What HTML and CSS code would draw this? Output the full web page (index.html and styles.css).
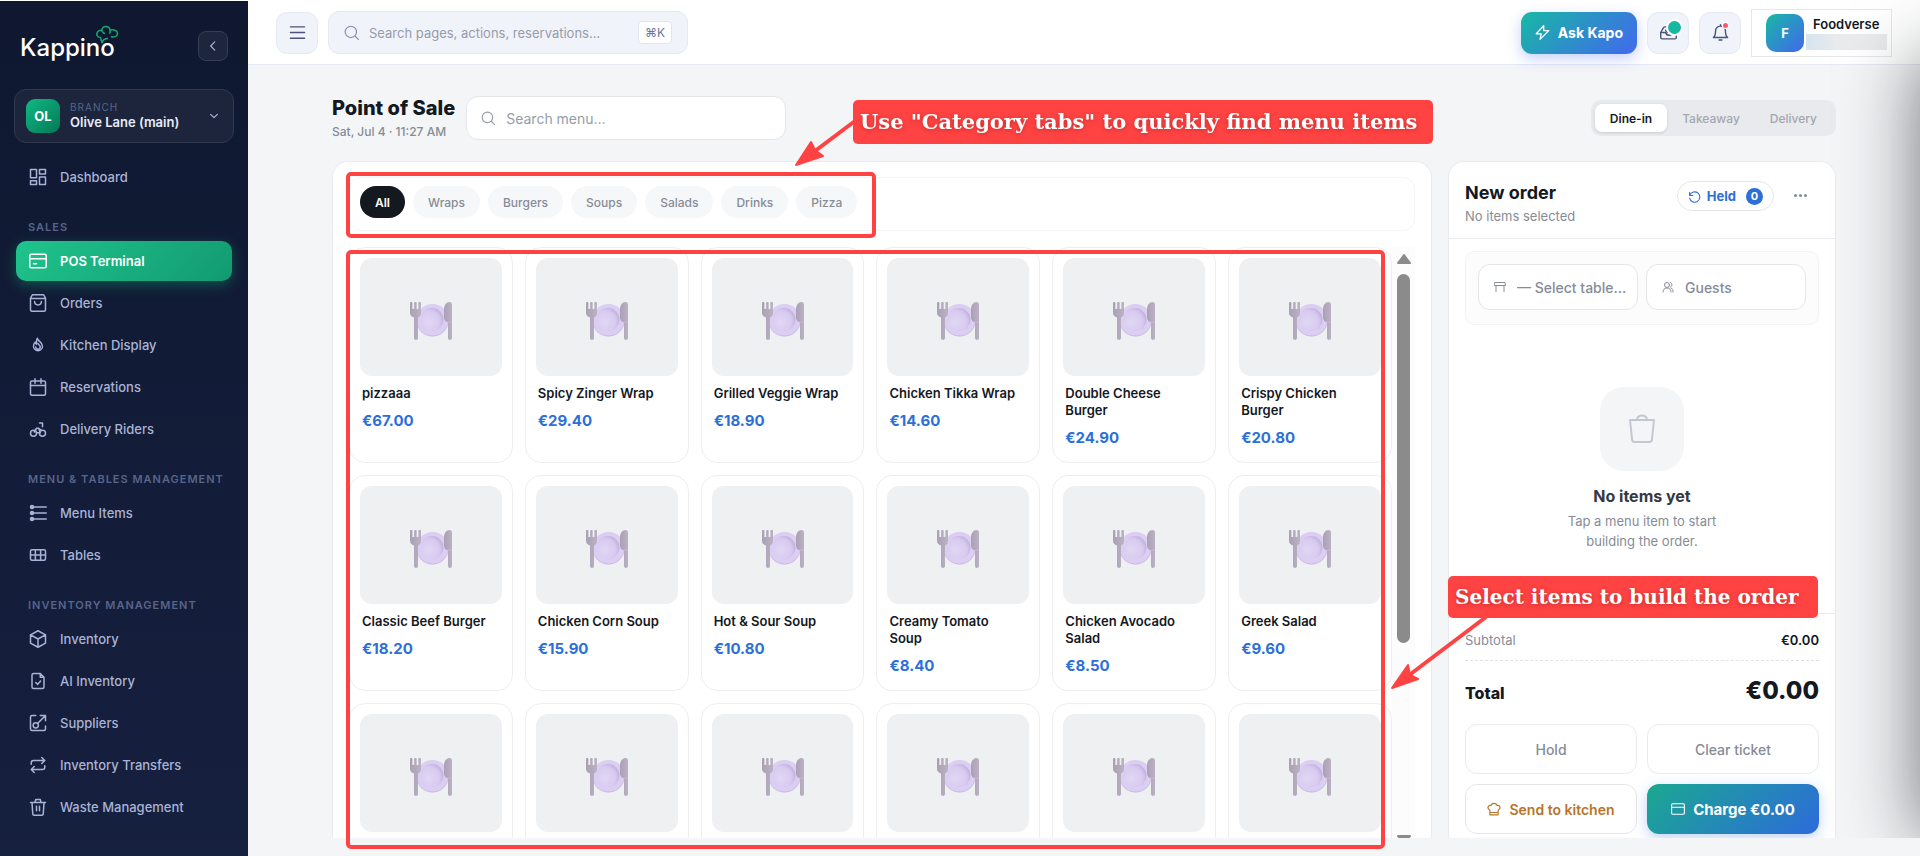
FILE: index.html
```html
<!DOCTYPE html>
<html lang="en">
<head>
    <meta charset="UTF-8">
    <meta name="viewport" content="width=device-width, initial-scale=1.0">
    <title>Kappino - Point of Sale</title>
    <link rel="stylesheet" href="styles.css">
</head>
<body>
    <!-- shared artwork for dishes without a photo -->
    <svg class="sprite" aria-hidden="true">
        <defs>
            <radialGradient id="dish" cx="35%" cy="60%" r="65%">
                <stop offset="0" stop-color="#e2d7f5"/>
                <stop offset="0.75" stop-color="#d7caef"/>
                <stop offset="1" stop-color="#c3b3de"/>
            </radialGradient>
            <linearGradient id="steel" x1="0" x2="1">
                <stop offset="0" stop-color="#aaa0b6"/>
                <stop offset="1" stop-color="#bab2c2"/>
            </linearGradient>
        </defs>
        <symbol id="plate" viewBox="0 0 42 38">
            <circle cx="22.5" cy="18.5" r="16" fill="#c9b6e4"/>
            <circle cx="22.5" cy="17.8" r="15.8" fill="#dccdf3"/>
            <circle cx="22" cy="17.6" r="11.5" fill="url(#dish)"/>
            <path fill="url(#steel)" d="M0 1a1 1 0 0 1 2.400 0v6h1.800V1a1 1 0 0 1 2.400 0v6h1.800V1a1 1 0 0 1 2.600 0v10c0 2-1.200 3.500-3 4.500V36a2 2 0 0 1-4 0V15.500C1.500 14.500 0 13 0 11z"/>
            <path fill="url(#steel)" d="M42 2.500V36a2 2 0 0 1-4 0V20.500c-2.500-.5-4-2.500-4-5.500V7.500C34 3 36.500 0 39.500 0 41 0 42 1 42 2.500z"/>
            <path fill="none" stroke="#c6bfd0" stroke-width="0.800" d="M38 20.200h3.800"/>
        </symbol>
    </svg>

    <div class="app">
        <aside class="sidebar">
            <div class="brand">
                <a class="logo" href="#">Kappino
                    <svg class="logo-hat" viewBox="0 0 24 20"><path d="M7 18 5.500 12.500C2 12.500 1 9 2.500 7S6 5 7 6c-.5-3 1.500-5 4.500-4.500s3.500 2.500 3.500 4c2-1.500 7-.5 7.500 2.500s-3 5-6.500 3.500M7 18c.5-2.500 3-4.500 6-4.500M7.500 6.500c.5 1.500 1.500 2 2.500 2M15 6c.5 1 .2 2-.5 2.800"/></svg>
                </a>
                <button class="collapse" aria-label="Collapse sidebar"><svg class="ico" viewBox="0 0 24 24"><path d="m15 5-7 7 7 7"/></svg></button>
            </div>

            <button class="branch">
                <span class="branch-badge">OL</span>
                <span class="branch-text"><small>BRANCH</small><b>Olive Lane (main)</b></span>
                <svg class="ico" viewBox="0 0 24 24"><path d="m4 8 8 8 8-8"/></svg>
            </button>

            <nav class="nav">
                <a href="#"><svg class="ico" viewBox="0 0 24 24"><rect x="2" y="2" width="8" height="11"/><rect x="14" y="2" width="8" height="6"/><rect x="2" y="17" width="8" height="5"/><rect x="14" y="12" width="8" height="10"/></svg>Dashboard</a>
                <h2>SALES</h2>
                <a href="#" class="active"><svg class="ico" viewBox="0 0 24 24"><rect x="1" y="3" width="22" height="18" rx="2"/><path d="M1 9h22M6 15.500h4"/></svg>POS Terminal</a>
                <a href="#"><svg class="ico" viewBox="0 0 24 24"><path d="M4.500 1h15L22 5.500V21a2 2 0 0 1-2 2H4a2 2 0 0 1-2-2V5.500zM2 6h20M7.500 10c0 6 9 6 9 0"/></svg>Orders</a>
                <a href="#"><svg class="ico" viewBox="0 0 24 24"><path d="M11 3c1 4 7 5 7 10.500a6 6 0 0 1-12 0C6 10.500 7 9 8.500 8c0 2 .5 2.500 1.500 3 0-3-.5-5 1-8zM12 10c1 2 3 2.500 3 4.500a3 3 0 0 1-6 0"/></svg>Kitchen Display</a>
                <a href="#"><svg class="ico" viewBox="0 0 24 24"><rect x="2" y="4" width="20" height="19" rx="2"/><path d="M2 10h20M8 1v6M16 1v6"/></svg>Reservations</a>
                <a href="#"><svg class="ico" viewBox="0 0 24 24"><circle cx="6" cy="17.500" r="4"/><circle cx="18" cy="17.500" r="4"/><path d="M7 16l3-5h3l2 6h-5M13 11l4 3M14 4h4v5"/></svg>Delivery Riders</a>
                <h2>MENU &amp; TABLES MANAGEMENT</h2>
                <a href="#"><svg class="ico" viewBox="0 0 24 24"><path d="M5 4h18M5 12h18M5 20h18"/><g fill="currentColor"><circle cx="4" cy="4" r="2"/><circle cx="4" cy="12" r="2"/><circle cx="4" cy="20" r="2"/></g></svg>Menu Items</a>
                <a href="#"><svg class="ico" viewBox="0 0 24 24"><rect x="2" y="5" width="20" height="14" rx="2"/><path d="M2 12h20M8.500 5v14M15.500 5v14"/></svg>Tables</a>
                <h2>INVENTORY MANAGEMENT</h2>
                <a href="#"><svg class="ico" viewBox="0 0 24 24"><path d="m12 1 10 5.500v11L12 23 2 17.500v-11zM2 6.500l10 5.500 10-5.500M12 12v11"/></svg>Inventory</a>
                <a href="#"><svg class="ico" viewBox="0 0 24 24"><path d="M6 2h9l5 5v13a2 2 0 0 1-2 2H6a2 2 0 0 1-2-2V4a2 2 0 0 1 2-2zM15 2v5h5M9 14l2.500 2.500L15.500 12"/></svg>AI Inventory</a>
                <a href="#"><svg class="ico" viewBox="0 0 24 24"><path d="M9 2H4a2 2 0 0 0-2 2v16a2 2 0 0 0 2 2h16a2 2 0 0 0 2-2v-4M12 12 22 2M15 2h7v7"/><circle cx="9" cy="15" r="3.500"/></svg>Suppliers</a>
                <a href="#"><svg class="ico" viewBox="0 0 24 24"><path d="M3 11V9a3 3 0 0 1 3-3h15M17 2l4 4-4 4M21 13v2a3 3 0 0 1-3 3H3M7 14l-4 4 4 4"/></svg>Inventory Transfers</a>
                <a href="#"><svg class="ico" viewBox="0 0 24 24"><path d="M2 6h20M8 6l1-4h6l1 4M4 6l1 15a2 2 0 0 0 2 2h10a2 2 0 0 0 2-2l1-15M10 11v6M14 11v6"/></svg>Waste Management</a>
            </nav>
        </aside>

        <div class="content">
            <header class="topbar">
                <button class="icon-btn" aria-label="Menu"><svg class="ico" viewBox="0 0 24 24"><path d="M2 4h20M2 12h20M2 20h20"/></svg></button>
                <label class="global-search">
                    <svg class="ico" viewBox="0 0 24 24"><circle cx="11" cy="11" r="9"/><path d="m18 18 5 5"/></svg>
                    <input type="text" placeholder="Search pages, actions, reservations…" aria-label="Search pages">
                    <kbd>⌘K</kbd>
                </label>
                <div class="topbar-right">
                    <button class="ask"><svg class="ico" viewBox="0 0 24 24"><path d="M14 1 2 14h8l-2 9L22 9h-8z"/></svg>Ask Kapo</button>
                    <button class="icon-btn" aria-label="Inbox">
                        <svg class="ico" viewBox="0 0 24 24"><path d="M1 12 5 5q.5-1 2-1h5M1 12v7a2 2 0 0 0 2 2h18a2 2 0 0 0 2-2v-6h-6c-1 4-8 4-9-1zM8 9l3 3"/></svg>
                        <i class="dot dot-green"></i>
                    </button>
                    <button class="icon-btn" aria-label="Notifications">
                        <svg class="ico" viewBox="0 0 24 24"><path d="M2 19c3-2 3-5 3-9a7 7 0 0 1 14 0c0 4 0 7 3 9zM10 22.500h4M12 3V1"/></svg>
                        <i class="dot dot-red"></i>
                    </button>
                    <button class="profile">
                        <span class="avatar">F</span>
                        <span class="profile-text"><b>Foodverse</b><i class="profile-mask"></i></span>
                    </button>
                </div>
            </header>

            <main class="page">
                <div class="page-head">
                    <div class="page-title">
                        <h1>Point of Sale</h1>
                        <p>Sat, Jul 4 · 11:27 AM</p>
                    </div>
                    <label class="menu-search">
                        <svg class="ico" viewBox="0 0 24 24"><circle cx="11" cy="11" r="9"/><path d="m18 18 5 5"/></svg>
                        <input type="text" placeholder="Search menu…" aria-label="Search menu">
                    </label>
                    <div class="order-type">
                        <button class="active">Dine-in</button>
                        <button>Takeaway</button>
                        <button>Delivery</button>
                    </div>
                </div>

                <div class="columns">
                    <section class="panel menu-panel">
                        <div class="tabs">
                            <button class="active">All</button>
                            <button>Wraps</button>
                            <button>Burgers</button>
                            <button>Soups</button>
                            <button>Salads</button>
                            <button>Drinks</button>
                            <button>Pizza</button>
                        </div>
                        <div class="menu-scroll">
                            <div class="menu-grid">
                                <button class="item"><span class="thumb"><svg><use href="#plate"/></svg></span><b>pizzaaa</b><em>€67.00</em></button>
                                <button class="item"><span class="thumb"><svg><use href="#plate"/></svg></span><b>Spicy Zinger Wrap</b><em>€29.40</em></button>
                                <button class="item"><span class="thumb"><svg><use href="#plate"/></svg></span><b>Grilled Veggie Wrap</b><em>€18.90</em></button>
                                <button class="item"><span class="thumb"><svg><use href="#plate"/></svg></span><b>Chicken Tikka Wrap</b><em>€14.60</em></button>
                                <button class="item"><span class="thumb"><svg><use href="#plate"/></svg></span><b>Double Cheese Burger</b><em>€24.90</em></button>
                                <button class="item"><span class="thumb"><svg><use href="#plate"/></svg></span><b>Crispy Chicken Burger</b><em>€20.80</em></button>
                                <button class="item"><span class="thumb"><svg><use href="#plate"/></svg></span><b>Classic Beef Burger</b><em>€18.20</em></button>
                                <button class="item"><span class="thumb"><svg><use href="#plate"/></svg></span><b>Chicken Corn Soup</b><em>€15.90</em></button>
                                <button class="item"><span class="thumb"><svg><use href="#plate"/></svg></span><b>Hot &amp; Sour Soup</b><em>€10.80</em></button>
                                <button class="item"><span class="thumb"><svg><use href="#plate"/></svg></span><b>Creamy Tomato Soup</b><em>€8.40</em></button>
                                <button class="item"><span class="thumb"><svg><use href="#plate"/></svg></span><b>Chicken Avocado Salad</b><em>€8.50</em></button>
                                <button class="item"><span class="thumb"><svg><use href="#plate"/></svg></span><b>Greek Salad</b><em>€9.60</em></button>
                                <button class="item"><span class="thumb"><svg><use href="#plate"/></svg></span></button>
                                <button class="item"><span class="thumb"><svg><use href="#plate"/></svg></span></button>
                                <button class="item"><span class="thumb"><svg><use href="#plate"/></svg></span></button>
                                <button class="item"><span class="thumb"><svg><use href="#plate"/></svg></span></button>
                                <button class="item"><span class="thumb"><svg><use href="#plate"/></svg></span></button>
                                <button class="item"><span class="thumb"><svg><use href="#plate"/></svg></span></button>
                            </div>
                            <div class="scrollbar">
                                <svg viewBox="0 0 16 12"><path d="M8 2 14 10H2z"/></svg>
                                <i class="thumb-bar"></i>
                                <svg class="down" viewBox="0 0 16 12"><path d="M2 2h12L8 10z"/></svg>
                            </div>
                        </div>
                    </section>

                    <section class="panel order-panel">
                        <div class="order-head">
                            <div>
                                <h2>New order</h2>
                                <p>No items selected</p>
                            </div>
                            <button class="held"><svg class="ico" viewBox="0 0 24 24"><path d="M3 4v6h6M3.500 9.500A9.500 9.500 0 1 1 3 15"/></svg>Held<span>0</span></button>
                            <button class="more" aria-label="More"><i></i><i></i><i></i></button>
                        </div>
                        <div class="order-fields">
                            <label>
                                <svg class="ico" viewBox="0 0 24 24"><path d="M2 3h20l1 6H1zM4 9v12M20 9v12"/></svg>
                                <select aria-label="Table"><option>— Select table…</option></select>
                            </label>
                            <label>
                                <svg class="ico" viewBox="0 0 24 24"><circle cx="10" cy="8" r="5"/><path d="M2 22c0-5 3-8 8-8s8 3 8 8M17 3c4 1 4 8 0 9M18 14c3 1 4 4 4 8"/></svg>
                                <input type="text" placeholder="Guests" aria-label="Guests">
                            </label>
                        </div>
                        <div class="empty">
                            <div class="empty-icon"><svg class="ico" viewBox="0 0 28 30"><path d="M2 6h24l-2 19a3 3 0 0 1-3 3H7a3 3 0 0 1-3-3zM9 6c0-6 10-6 10 0"/></svg></div>
                            <h3>No items yet</h3>
                            <p>Tap a menu item to start<br>building the order.</p>
                        </div>
                        <div class="summary">
                            <div class="subtotal"><span>Subtotal</span><b>€0.00</b></div>
                            <div class="total"><span>Total</span><b>€0.00</b></div>
                            <div class="actions">
                                <button>Hold</button>
                                <button>Clear ticket</button>
                                <button class="kitchen"><svg class="ico" viewBox="0 0 24 24"><path d="M5 14c-6-3-3-9 2-8 1-5 9-5 10 0 5-1 8 5 2 8v8H5zM5 18h14"/></svg>Send to kitchen</button>
                                <button class="charge"><svg class="ico" viewBox="0 0 24 24"><rect x="1" y="3" width="22" height="18" rx="2"/><path d="M1 9h22"/></svg>Charge €0.00</button>
                            </div>
                        </div>
                    </section>
                </div>
            </main>
        </div>
    </div>

    <div class="edge-shade"></div>

    <!-- tutorial callouts -->
    <div class="callouts">
        <svg class="callout-lines" width="1920" height="856">
            <g fill="none" stroke="#ff4343" stroke-width="4">
                <rect x="348" y="174" width="526" height="62" rx="3"/>
                <rect x="348" y="252" width="1035" height="595" rx="3"/>
                <path d="M855 121 815 151M1486 617 1408 676"/>
            </g>
            <path fill="#ff4343" stroke="#ff4343" stroke-width="2" stroke-linejoin="round" d="m796 165 15-23 4 8 8 6zM1392 688l16-23 2 10 8 4z"/>
        </svg>
        <p class="callout callout-tabs">Use "Category tabs" to quickly find menu items</p>
        <p class="callout callout-items">Select items to build the order</p>
    </div>
</body>
</html>
```

FILE: styles.css
```css
* {
    box-sizing: border-box;
}

body {
    margin: 0;
    overflow: hidden;
    font-family: Inter, "Open Sans", sans-serif;
    font-size: 13px;
    color: #14181f;
    background: #f4f5f7;
}

h1, h2, h3, p {
    margin: 0;
}

button, input, select {
    font: inherit;
    color: inherit;
}

button {
    padding: 0;
    border: none;
    background: none;
    cursor: pointer;
}

input, select {
    width: 100%;
    min-width: 0;
    padding: 0;
    border: none;
    outline: none;
    background: none;
    appearance: none;
}

a {
    color: inherit;
    text-decoration: none;
}

.ico {
    flex: none;
    width: 18px;
    height: 18px;
    fill: none;
    stroke: currentColor;
    stroke-width: 2;
    stroke-linecap: round;
    stroke-linejoin: round;
}

.sprite {
    position: absolute;
    width: 0;
    height: 0;
}

.app {
    display: flex;
    height: 100vh;
    border-top: 1px solid #fff;
}

/* Sidebar */
.sidebar {
    flex: none;
    width: 248px;
    padding: 22px 14px 0;
    background: linear-gradient(180deg, #0f1830, #16203f);
    color: #a9b3d6;
}

.brand {
    display: flex;
    align-items: center;
    justify-content: space-between;
    height: 46px;
    padding: 0 6px;
}

.logo {
    position: relative;
    padding-top: 3px;
    font-size: 24px;
    font-weight: 500;
    color: #fff;
}

.logo-hat {
    position: absolute;
    right: -4px;
    top: -5px;
    width: 24px;
    height: 20px;
    fill: none;
    stroke: #14a673;
    stroke-width: 1.5;
}

.collapse {
    display: grid;
    place-items: center;
    width: 30px;
    height: 30px;
    border: 1px solid #363e54;
    border-radius: 8px;
    background: #1d263c;
}

.collapse .ico {
    width: 14px;
    height: 14px;
}

.branch {
    display: flex;
    align-items: center;
    gap: 10px;
    width: 100%;
    height: 54px;
    margin: 20px 0 14px;
    padding: 0 14px 0 11px;
    border: 1px solid #2e374e;
    border-radius: 12px;
    background: #1c253c;
    text-align: left;
}

.branch-badge {
    display: grid;
    place-items: center;
    width: 34px;
    height: 34px;
    border-radius: 9px;
    background: linear-gradient(135deg, #10b981, #047857);
    color: #fff;
    font-weight: 700;
}

.branch-text {
    flex: 1;
}

.branch-text small {
    display: block;
    font-size: 10px;
    line-height: 13px;
    letter-spacing: 1px;
    color: #58648a;
}

.branch-text b {
    display: block;
    line-height: 17px;
    font-weight: 600;
    color: #e8ecf8;
}

.branch .ico {
    width: 10px;
    height: 10px;
    stroke-width: 3;
}

.nav {
    display: flex;
    flex-direction: column;
    gap: 2px;
    padding: 0 2px;
}

.nav h2 {
    height: 40px;
    padding: 20px 12px 0;
    font-size: 11px;
    line-height: 16px;
    font-weight: 600;
    letter-spacing: 1px;
    white-space: nowrap;
    color: #58648a;
}

.nav a {
    display: flex;
    align-items: center;
    gap: 13px;
    height: 40px;
    padding: 0 13px;
    border-radius: 10px;
    font-weight: 500;
}

.nav a.active {
    background: linear-gradient(135deg, #20c48c, #129a71);
    box-shadow: 0 4px 14px rgba(16, 185, 129, 0.35);
    color: #fff;
    font-weight: 600;
}

/* Top bar */
.content {
    flex: 1;
    display: flex;
    flex-direction: column;
    min-width: 0;
}

.topbar {
    display: flex;
    align-items: center;
    gap: 10px;
    height: 64px;
    padding: 0 28px;
    border-bottom: 1px solid #e5e9f5;
    background: #fff;
}

.icon-btn {
    position: relative;
    display: grid;
    place-items: center;
    width: 42px;
    height: 42px;
    border: 1px solid #e5e9f5;
    border-radius: 11px;
    background: #f1f3fb;
    color: #4a5478;
}

.icon-btn .ico {
    width: 17px;
    height: 17px;
}

.global-search {
    display: flex;
    align-items: center;
    gap: 10px;
    width: 360px;
    height: 43px;
    padding: 0 15px;
    border: 1px solid #e5e9f5;
    border-radius: 11px;
    background: #f1f3fb;
}

.global-search .ico {
    width: 15px;
    height: 15px;
    color: #8a93b0;
}

input::placeholder {
    color: #969ca8;
    opacity: 1;
}

kbd {
    flex: none;
    padding: 2px 6px;
    border: 1px solid #e1e5f0;
    border-radius: 4px;
    background: #fff;
    font-family: inherit;
    font-size: 12px;
    line-height: 17px;
    color: #6b7596;
}

.topbar-right {
    display: flex;
    align-items: center;
    gap: 10px;
    margin-left: auto;
}

.ask {
    display: flex;
    align-items: center;
    gap: 8px;
    height: 42px;
    padding: 0 14px;
    border-radius: 11px;
    background: linear-gradient(135deg, #18b8a4, #4268ee);
    box-shadow: 0 5px 14px rgba(66, 104, 238, 0.3);
    color: #fff;
    font-size: 14px;
    font-weight: 700;
}

.ask .ico {
    width: 15px;
    height: 15px;
}

.dot {
    position: absolute;
    border-radius: 50%;
}

.dot-green {
    top: 8px;
    right: 7px;
    width: 13px;
    height: 13px;
    background: #16b8a2;
    box-shadow: 0 0 0 2px #fff;
}

.dot-red {
    top: 10px;
    right: 12px;
    width: 5px;
    height: 5px;
    background: #fb5a6e;
    box-shadow: 0 0 0 1px #fff;
}

.profile {
    display: flex;
    align-items: center;
    gap: 2px;
    width: 141px;
    height: 48px;
    padding-left: 14px;
    border: 1px solid #e6e7ea;
    text-align: left;
}

.avatar {
    display: grid;
    place-items: center;
    width: 38px;
    height: 38px;
    border-radius: 10px;
    background: linear-gradient(135deg, #18b8a4, #4268ee);
    color: #fff;
    font-weight: 700;
}

.profile-text b {
    display: block;
    padding-left: 7px;
    line-height: 18px;
    font-weight: 600;
}

.profile-mask {
    display: block;
    width: 81px;
    height: 16px;
    margin-top: 1px;
    background: linear-gradient(90deg, #d5e4f0, #eaebed 40%);
}

/* Page */
.page {
    flex: 1;
    display: flex;
    flex-direction: column;
    min-height: 0;
    padding: 30px 84px 18px;
}

.page-head {
    display: flex;
    align-items: center;
    gap: 11px;
    margin-bottom: 20px;
}

.page-title h1 {
    font-size: 20px;
    line-height: 26px;
    font-weight: 800;
}

.page-title p {
    font-size: 12px;
    line-height: 18px;
    padding-top: 2px;
    font-weight: 500;
    color: #868c97;
}

.menu-search {
    display: flex;
    align-items: center;
    gap: 11px;
    width: 320px;
    height: 44px;
    padding: 0 14px;
    border: 1px solid #e4e6ea;
    border-radius: 12px;
    background: #fff;
    font-size: 14px;
}

.menu-search .ico {
    width: 14px;
    height: 14px;
    color: #969ca8;
}

.order-type {
    display: flex;
    margin-left: auto;
    padding: 4px;
    border-radius: 10px;
    background: #e9eaee;
    color: #a2a7b0;
    font-size: 12px;
}

.order-type button {
    height: 28px;
    padding: 0 15px;
    border-radius: 7px;
    font-weight: 500;
}

.order-type .active {
    background: #fff;
    box-shadow: 0 1px 3px rgba(20, 24, 31, 0.15);
    color: #14181f;
    font-weight: 600;
}

.columns {
    flex: 1;
    display: grid;
    grid-template-columns: 1fr 388px;
    grid-template-rows: minmax(0, 1fr);
    gap: 16px;
    min-height: 0;
}

.panel {
    display: flex;
    flex-direction: column;
    overflow: hidden;
    border: 1px solid #e9ebee;
    border-bottom: none;
    border-radius: 16px 16px 0 0;
    background: #fff;
}

.menu-panel {
    padding: 15px 16px 0;
}

.tabs {
    display: flex;
    gap: 8px;
    margin-bottom: 16px;
    padding: 8px 10px 12px;
    border: 1px solid #f3f4f6;
    border-radius: 12px;
    font-size: 12px;
}

.tabs button {
    height: 32px;
    padding: 0 15px;
    border-radius: 16px;
    background: #f6f7f9;
    color: #868c97;
    font-weight: 500;
}

.tabs .active {
    background: #14181f;
    color: #fff;
    font-weight: 600;
}

.menu-scroll {
    flex: 1;
    display: flex;
    min-height: 0;
}

.menu-grid {
    flex: 1;
    display: grid;
    grid-template-columns: repeat(6, 1fr);
    grid-auto-rows: 216px;
    gap: 12px;
}

.item {
    display: flex;
    flex-direction: column;
    min-width: 0;
    padding: 10px;
    border: 1px solid #edeef0;
    border-radius: 16px;
    text-align: left;
}

.thumb {
    display: grid;
    place-items: center;
    width: 100%;
    height: 118px;
    margin-bottom: 9px;
    padding-top: 7px;
    border-radius: 12px;
    background: #eff0f2;
}

.thumb svg {
    width: 42px;
    height: 38px;
}

.item b, .item em {
    padding: 0 8px 0 2px;
}

.item b {
    line-height: 17px;
    font-weight: 600;
}

.item em {
    margin-top: 9px;
    font-size: 15px;
    line-height: 20px;
    font-style: normal;
    font-weight: 700;
    color: #2d6fd9;
}

.scrollbar {
    display: flex;
    flex-direction: column;
    align-items: center;
    flex: none;
    width: 23px;
    padding-top: 6px;
    background: #fcfcfc;
}

.scrollbar svg {
    flex: none;
    width: 16px;
    height: 12px;
    fill: #8b8b8b;
    stroke: #8b8b8b;
    stroke-width: 2;
    stroke-linejoin: round;
}

.scrollbar .down {
    margin: auto 0 -8px;
}

.thumb-bar {
    width: 13px;
    height: 63%;
    margin-top: 9px;
    border-radius: 7px;
    background: #8b8b8b;
}

/* Order */
.order-head {
    display: flex;
    align-items: flex-start;
    padding: 18px 16px 12px;
    border-bottom: 1px solid #e9ebee;
}

.order-head h2 {
    font-size: 18px;
    line-height: 26px;
    font-weight: 700;
}

.order-head p {
    line-height: 20px;
    color: #868c97;
}

.held {
    display: flex;
    align-items: center;
    gap: 6px;
    height: 30px;
    margin: 1px 0 0 auto;
    padding: 0 10px;
    border: 1px solid #e4e6ea;
    border-radius: 15px;
    color: #2d6fd9;
    font-weight: 700;
}

.held .ico {
    width: 13px;
    height: 13px;
}

.held span {
    width: 17px;
    margin-left: 4px;
    border-radius: 9px;
    background: #2d6fd9;
    color: #fff;
    font-size: 11px;
    line-height: 17px;
}

.more {
    display: flex;
    gap: 2px;
    margin: 14px 12px 0 20px;
}

.more i {
    width: 3px;
    height: 3px;
    border-radius: 50%;
    background: #868c97;
}

.order-fields {
    display: grid;
    grid-template-columns: 1fr 1fr;
    gap: 8px;
    margin: 12px 16px 0;
    padding: 12px 12px 14px;
    border: 1px solid #f1f2f4;
    border-radius: 10px;
    background: #fcfcfc;
}

.order-fields label {
    display: flex;
    align-items: center;
    gap: 11px;
    height: 46px;
    padding: 0 8px 0 15px;
    border: 1px solid #e4e6ea;
    border-radius: 12px;
    background: #fff;
    font-size: 14px;
    font-weight: 500;
    color: #868c97;
}

.order-fields input::placeholder {
    color: #868c97;
}

.order-fields .ico {
    width: 12px;
    height: 12px;
}

.empty {
    flex: 1;
    display: flex;
    flex-direction: column;
    align-items: center;
    justify-content: center;
    text-align: center;
}

.empty-icon {
    display: grid;
    place-items: center;
    width: 84px;
    height: 84px;
    margin-bottom: 14px;
    border-radius: 24px;
    background: #f4f5f7;
    color: #c3c7d0;
}

.empty-icon .ico {
    width: 28px;
    height: 30px;
}

.empty h3 {
    font-size: 16px;
    line-height: 22px;
    font-weight: 700;
    color: #333944;
}

.empty p {
    padding-top: 4px;
    line-height: 20px;
    color: #868c97;
}

.summary {
    padding: 16px 16px 4px;
    border-top: 1px solid #e9ebee;
}

.subtotal {
    display: flex;
    justify-content: space-between;
    padding-bottom: 10px;
    border-bottom: 1px dashed #e0e2e6;
    line-height: 20px;
    color: #868c97;
}

.subtotal b {
    font-weight: 600;
    color: #14181f;
}

.total {
    display: flex;
    align-items: baseline;
    justify-content: space-between;
    padding: 14px 0 15px;
    font-size: 16px;
    line-height: 32px;
    font-weight: 800;
}

.total b {
    font-size: 24px;
    font-weight: 800;
}

.actions {
    display: grid;
    grid-template-columns: 1fr 1fr;
    gap: 10px;
}

.actions button {
    display: flex;
    align-items: center;
    justify-content: center;
    gap: 8px;
    height: 50px;
    border: 1px solid #e9ebee;
    border-radius: 12px;
    font-size: 14px;
    font-weight: 500;
    color: #868c97;
}

.actions .ico {
    width: 14px;
    height: 14px;
}

.actions .kitchen {
    border-color: #e4e6ea;
    color: #b8742a;
    font-weight: 600;
}

.actions .charge {
    border: none;
    background: linear-gradient(135deg, #1aa890, #2d6bdb);
    box-shadow: 0 4px 14px rgba(45, 107, 219, 0.3);
    color: #fff;
    font-size: 15px;
    font-weight: 700;
}

/* Shade falling in from the right edge of the window */
.edge-shade {
    position: fixed;
    top: 0;
    right: 0;
    bottom: 18px;
    width: 100px;
    overflow: hidden;
    pointer-events: none;
}

.edge-shade::before {
    content: "";
    position: absolute;
    left: 100%;
    top: 56px;
    bottom: 0;
    width: 100px;
    box-shadow: 0 0 76px rgba(20, 28, 30, 0.6);
}

/* Callouts */
.callouts {
    position: absolute;
    inset: 0;
    pointer-events: none;
}

.callout-lines {
    display: block;
}

.callout {
    position: absolute;
    padding: 0 7px;
    border-radius: 5px;
    background: #ff4343;
    color: #fff;
    font-family: "DejaVu Serif", serif;
    font-weight: 700;
    text-shadow: 0 1px 4px rgba(160, 30, 30, 0.6);
    white-space: nowrap;
}

.callout-tabs {
    left: 853px;
    top: 100px;
    width: 580px;
    font-size: 21px;
    line-height: 44px;
}

.callout-items {
    left: 1448px;
    top: 576px;
    width: 370px;
    font-size: 20px;
    line-height: 42px;
}
```
